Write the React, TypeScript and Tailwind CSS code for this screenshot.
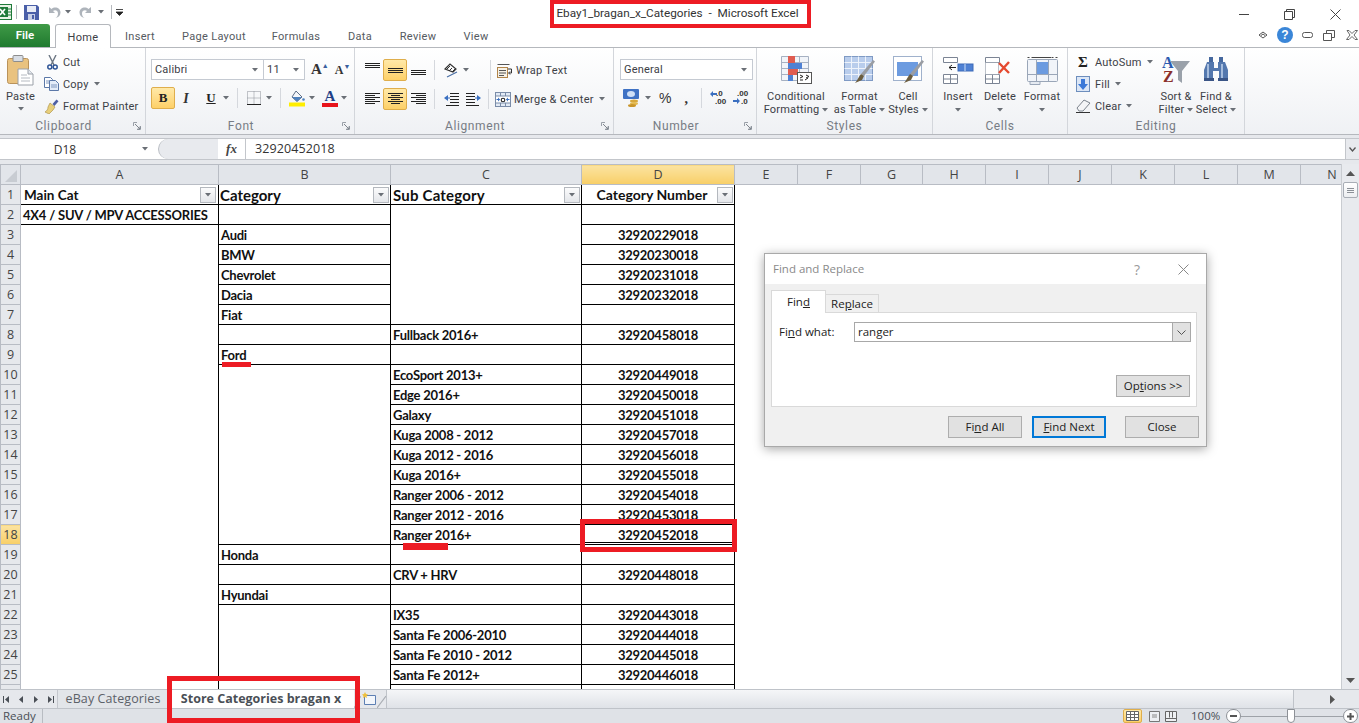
import type { ReactNode } from 'react'

const Caret = ({ className = '' }: { className?: string }) => (
    <svg width="6" height="4" viewBox="0 0 6 4" className={`shrink-0 ${className}`}>
        <path d="M0 0h6L3 3.500z" fill="#6a6f76" />
    </svg>
)

const Sep = ({ className = '' }: { className?: string }) => <div className={`w-px h-[20px] bg-[#d5d8dd] shrink-0 ${className}`} />

const Lines = ({ rows, w = 15, h = 12 }: { rows: [number, number, number][]; w?: number; h?: number }) => (
    <svg width={w} height={h} viewBox={`0 0 ${w} ${h}`} className="shrink-0">
        {rows.map(([a, b, y], i) => (
            <path key={i} d={`M${a} ${y + 0.5}H${b}`} stroke="#222" strokeWidth="1" />
        ))}
    </svg>
)

const ExcelIcon = () => (
    <svg width="15" height="16" viewBox="0 0 15 16" className="-ml-[3px] shrink-0">
        <rect x="0.500" y="0.500" width="14" height="15" fill="#e8f3e6" stroke="#1f7a3a" />
        <rect x="1" y="3" width="10" height="10" fill="#1f7a3a" />
        <path d="M3 5l5 6M8 5l-5 6" stroke="#fff" strokeWidth="1.600" />
        <path d="M11 5h3M11 8h3M11 11h3" stroke="#1f7a3a" />
    </svg>
)

const SaveIcon = () => (
    <svg width="15" height="15" viewBox="0 0 15 15" className="shrink-0">
        <path d="M0 0h13l2 2v13H0z" fill="#4a5fa8" />
        <rect x="3" y="1" width="9" height="6" fill="#e8ecf6" />
        <rect x="4" y="9" width="7" height="6" fill="#c7cfe6" />
        <rect x="8" y="10" width="2" height="4" fill="#4a5fa8" />
    </svg>
)

const UndoIcon = ({ flip = false }: { flip?: boolean }) => (
    <svg width="13" height="13" viewBox="0 0 13 13" className={`shrink-0 ${flip ? '-scale-x-100' : ''}`}>
        <path d="M1 1v6h6L5 5c2-1.500 5-.5 5 2.500 0 2-1 3.500-2.500 4.500 3-.5 5-2.500 5-5.500C12.500 2 7 0 3.500 3z" fill="#aeb4bb" />
    </svg>
)

const PasteIcon = () => (
    <svg width="27" height="31" viewBox="0 0 27 31" className="shrink-0">
        <rect x="0.500" y="3.500" width="21" height="25" rx="2" fill="#e9c27f" stroke="#b9925a" />
        <rect x="6" y="0.500" width="10" height="6" rx="1" fill="#d8dde4" stroke="#8d8d8d" />
        <path d="M11 14h10l5 5v11H11z" fill="#fff" stroke="#9aa0a8" />
        <path d="M21 14v5h5" fill="#e4e8ee" stroke="#9aa0a8" />
        <path d="M14 20h6M14 23h9M14 26h9" stroke="#b5bac1" />
    </svg>
)

const CutIcon = () => (
    <svg width="11" height="15" viewBox="0 0 11 15" className="shrink-0">
        <path d="M2 0l5 10M9 0L4 10" stroke="#6c7683" strokeWidth="1.400" />
        <circle cx="2.800" cy="12" r="2" fill="none" stroke="#2f5597" strokeWidth="1.500" />
        <circle cx="8.200" cy="12" r="2" fill="none" stroke="#2f5597" strokeWidth="1.500" />
    </svg>
)

const CopyIcon = () => (
    <svg width="15" height="14" viewBox="0 0 15 14" className="shrink-0">
        <path d="M.5.500h6l2 2v8H.5z" fill="#fff" stroke="#5b78a8" />
        <path d="M5.500 3.500h6l3 3v7h-9z" fill="#e4ecf8" stroke="#5b78a8" />
        <path d="M7 8h6M7 10h6M2 4h3M2 6h3" stroke="#7f97bf" />
    </svg>
)

const PainterIcon = () => (
    <svg width="15" height="15" viewBox="0 0 15 15" className="shrink-0">
        <path d="M8.500 5l4-4.500 2 1.800L10.500 7z" fill="#4d5fa3" />
        <path d="M6 4l5 4-2 3-4 4-4-2c2-1 3-3 3-5z" fill="#e8cf7a" stroke="#a68a3c" strokeWidth=".6" />
    </svg>
)

const FillIcon = () => (
    <svg width="17" height="17" viewBox="0 0 17 17" className="shrink-0">
        <path d="M7 1l6 6-5 4.500L3 7z" fill="#f4f6fa" stroke="#5d6d85" />
        <path d="M3 7l5 4.500 5-4.500z" fill="#4f81bd" />
        <circle cx="14.500" cy="9.500" r="1.300" fill="#4f81bd" />
        <rect x="0" y="12.500" width="16" height="4" fill="#ffee00" />
    </svg>
)

const BorderIcon = () => (
    <svg width="14" height="14" viewBox="0 0 14 14" className="shrink-0">
        <path d="M.5.500h13v13h-13zM7 .500v13M.5 7h13" fill="none" stroke="#8a8f96" strokeDasharray="1 1" />
        <path d="M0 13.500h14" stroke="#222" />
    </svg>
)

const FontColorIcon = () => (
    <div className="flex flex-col items-center w-[16px] shrink-0">
        <span className="font-['Liberation_Serif',serif] font-bold text-[15px] leading-[13px] text-[#1f3f87]">A</span>
        <div className="w-[16px] h-[4px] bg-[#e8141c]" />
    </div>
)

const OrientationIcon = () => (
    <svg width="16" height="15" viewBox="0 0 16 15" className="shrink-0">
        <path d="M1 6l5-5 6 5-3 3z" fill="none" stroke="#333" strokeWidth="1.200" />
        <path d="M3 6l3-3M5 8l3-3M8 9l3-3" stroke="#333" />
        <path d="M3 14l10-5" stroke="#4a6fa5" strokeWidth="1.200" />
    </svg>
)

const IndentIcon = ({ flip = false }: { flip?: boolean }) => (
    <svg width="15" height="14" viewBox="0 0 15 14" className={`shrink-0 ${flip ? '-scale-x-100' : ''}`}>
        <path d="M6 1.500h9M6 4.500h9M6 7.500h9M6 10.500h9M2 13.500h13" stroke="#222" />
        <path d="M0 6l4-3v6z" fill="#3a6fc0" />
        <path d="M4 6h2" stroke="#3a6fc0" />
    </svg>
)

const WrapIcon = () => (
    <svg width="16" height="15" viewBox="0 0 16 15" className="shrink-0">
        <rect x="0.500" y="4.500" width="10" height="10" fill="#f6f1e6" stroke="#b2854a" />
        <path d="M.5 1.500h12M2 7.500h7M2 10h7M2 12.500h5" stroke="#555" />
        <path d="M11 6h3.500v4H12M13 8.500L11.500 10 13 11.500" fill="none" stroke="#333" />
    </svg>
)

const MergeIcon = () => (
    <svg width="16" height="15" viewBox="0 0 16 15" className="shrink-0">
        <rect x="0.500" y="0.500" width="15" height="14" fill="#e2eaf5" stroke="#7a8ca8" />
        <rect x="1" y="4" width="14" height="7" fill="#fff" />
        <path d="M1.500 7.500h3M14.500 7.500h-3" stroke="#3a6fc0" />
        <path d="M5 7.500l-2-2v4zM11 7.500l2-2v4z" fill="#3a6fc0" />
        <circle cx="8" cy="8" r="1.800" fill="none" stroke="#222" strokeWidth="1.100" />
        <path d="M.5 4h15M.5 11h15M5.500.5v3.500M10.500.5v3.500M5.500 11v3.500M10.500 11v3.500" stroke="#7a8ca8" />
    </svg>
)

const CurrencyIcon = () => (
    <svg width="18" height="18" viewBox="0 0 18 18" className="shrink-0">
        <rect x="0" y="0" width="16" height="10" rx="1" fill="#3f72c4" />
        <ellipse cx="8" cy="5" rx="4" ry="3" fill="#cfe0f7" />
        <ellipse cx="11" cy="12" rx="4" ry="1.500" fill="#d7a83b" />
        <ellipse cx="11" cy="14.500" rx="4" ry="1.500" fill="#e4ba50" />
        <ellipse cx="9" cy="16.500" rx="4" ry="1.500" fill="#c9952a" />
    </svg>
)

const DecimalIcon = ({ more = false }: { more?: boolean }) => (
    <div className="relative w-[16px] h-[14px] shrink-0">
        <span className={`absolute top-[-2px] font-['Liberation_Sans',sans-serif] text-[8px] leading-[9px] font-bold text-[#333] ${more ? 'left-[4px]' : 'left-[6px]'}`}>{more ? '.00' : '.0'}</span>
        <span className={`absolute top-[6px] font-['Liberation_Sans',sans-serif] text-[8px] leading-[9px] font-bold text-[#333] ${more ? 'left-[8px]' : 'left-[5px]'}`}>{more ? '.0' : '.00'}</span>
        <svg width="7" height="6" viewBox="0 0 7 6" className={`absolute ${more ? 'left-0 top-[7px] rotate-180' : 'left-0 top-0'}`}>
            <path d="M0 3l3-3v2h4v2H3v2z" fill="#3a6fc0" />
        </svg>
    </div>
)

const CondFmtIcon = () => (
    <svg width="31" height="28" viewBox="0 0 31 28">
        <path d="M.5.500h27v24h-27zM9.500.500v24M18.500.500v24M.5 6.500h27M.5 12.500h27M.5 18.500h27" fill="#f1f4f9" stroke="#a6b1c2" />
        <rect x="7" y="0" width="7" height="7" fill="#e05c50" />
        <rect x="7" y="7" width="14" height="6" fill="#4f81d4" />
        <rect x="7" y="13" width="10" height="6" fill="#e05c50" />
        <rect x="7" y="19" width="5" height="6" fill="#4f81d4" />
        <rect x="16.500" y="16.500" width="14" height="11" fill="#fff" stroke="#555" />
        <path d="M19 19l3 1.500-3 1.500M19 24h3M25 19l3 1.500-3 1.500M24 24l3-2" stroke="#222" fill="none" />
    </svg>
)

const TableBrushIcon = ({ solid = false }: { solid?: boolean }) => (
    <svg width="31" height="29" viewBox="0 0 31 29">
        {solid ? (
            <>
                <rect x="0.500" y="0.500" width="28" height="24" fill="#fff" stroke="#9fb1cc" />
                <rect x="4" y="6" width="21" height="14" fill="#6c9be0" />
            </>
        ) : (
            <>
                <rect x="0.500" y="0.500" width="28" height="24" fill="#b9cdec" stroke="#7f9ac4" />
                <path d="M7.500 .500v24M14.500 .500v24M21.500 .500v24M.5 6.500h28M.5 12.500h28M.5 18.500h28" stroke="#eef3fb" />
            </>
        )}
        <path d="M29 4l2 1.500L20 20l-3-2z" fill="#9a9da3" />
        <path d="M17 18l3 2-2 4-7 3c2-2 3-5 6-9z" fill="#6b5d3f" />
    </svg>
)

const CellsGrid = ({ children }: { children: ReactNode }) => (
    <svg width="31" height="29" viewBox="0 0 31 29">{children}</svg>
)

const InsertIcon = () => (
    <CellsGrid>
        <path d="M.5 1.500h14v5h-14zM.5 18.500h14v9h-14zM7.500 18.500v9M.5 23h14" fill="#fff" stroke="#7b8494" />
        <rect x="15" y="8" width="15" height="7" fill="#4f81d4" stroke="#3d6ab8" />
        <path d="M22 8v7" stroke="#cfe0f7" />
        <path d="M6 11.500h7M6 11.500l3-2.500M6 11.500l3 2.500" stroke="#222" fill="none" />
    </CellsGrid>
)

const DeleteIcon = () => (
    <CellsGrid>
        <path d="M.5 1.500h14v5h-14zM.5 18.500h14v9h-14zM7.500 18.500v9M.5 23h14" fill="#fff" stroke="#7b8494" />
        <path d="M.5 6.500h13v12h-13z" fill="#fff" stroke="#7b8494" strokeDasharray="1 1" />
        <path d="M14 7l10 10M24 6L14 17" stroke="#e5492f" strokeWidth="2.400" />
    </CellsGrid>
)

const FormatIcon = () => (
    <CellsGrid>
        <path d="M.5 1.500h30" stroke="#444" strokeDasharray="2 2" />
        <path d="M6 1.500h18" stroke="#444" />
        <rect x="0.500" y="3.500" width="30" height="22" rx="1" fill="#f1f4f9" stroke="#9aa6b8" />
        <path d="M9.500 3.500v22M21.500 3.500v22M.5 18.500h30" stroke="#9aa6b8" />
        <rect x="10" y="6" width="11" height="12" fill="#6c9be0" />
        <path d="M3 25.500h10v3H3z" fill="#e6ebf2" stroke="#9aa6b8" />
    </CellsGrid>
)

const SigmaIcon = () => (
    <span className="font-['Liberation_Serif',serif] font-bold text-[15px] leading-[14px] text-[#222] w-[10px] shrink-0 flex justify-center">Σ</span>
)

const FillDownIcon = () => (
    <svg width="14" height="16" viewBox="0 0 14 16" className="shrink-0 ml-[-2px]">
        <rect x="0.500" y="0.500" width="13" height="15" fill="#dbe6f6" stroke="#6d8ebd" />
        <path d="M5 3h4v5h3l-5 6-5-6h3z" fill="#3a78d8" />
    </svg>
)

const EraserIcon = () => (
    <svg width="15" height="14" viewBox="0 0 15 14" className="shrink-0 ml-[-2px]">
        <path d="M1 9l7-8 6 3-7 8H3z" fill="#f4f5f7" stroke="#7b828c" />
        <path d="M0 13.500h14" stroke="#333" />
    </svg>
)

const SortIcon = () => (
    <div className="relative w-[30px] h-[29px] flex flex-col font-['Liberation_Serif',serif] font-bold text-[16px] leading-[14px]">
        <span className="text-[#2b5bb0] pl-[1px]">A</span>
        <span className="text-[#8a2f2a] pl-[2px]">Z</span>
        <svg width="21" height="23" viewBox="0 0 21 23" className="absolute left-[9px] top-[5px]">
            <path d="M0 0h20l-8 10v12l-4-3V10z" fill="#9aa1aa" />
        </svg>
    </div>
)

const BinocularIcon = () => (
    <svg width="28" height="26" viewBox="0 0 28 26">
        <path d="M7 1h4v5H7zM17 1h4v5h-4z" fill="#46689e" />
        <path d="M5 6h7v6h4V6h7l3 8v11h-9V15h-6v10H2V14z" fill="#5478ae" />
        <path d="M5 8h2v16H5zM19 8h2v16h-2z" fill="#a6bddd" />
        <path d="M2 22h10v3H2zM16 22h10v3H16z" fill="#3a5586" />
    </svg>
)

const DialogLauncher = () => (
    <svg width="8" height="8" viewBox="0 0 8 8">
        <path d="M.5 4V.5H4M7.500 4v3.500H4" fill="none" stroke="#9aa0a8" />
        <path d="M2 2l5 5M4.500 7h2.500V4.500" fill="none" stroke="#7f858d" />
    </svg>
)

const Group = ({ label, launcher = true, className, children }: { label: string; launcher?: boolean; className: string; children: ReactNode }) => (
    <div className={`flex flex-col shrink-0 border-r border-[#d3d6db] ${className}`}>
        <div className="h-[69px] flex">{children}</div>
        <div className="h-[17px] flex items-center text-[12px] tracking-[0.6px] text-[#777c84]">
            <span className="flex-1 text-center">{label}</span>
            {launcher && <span className="w-[18px] flex justify-end pr-[4px]"><DialogLauncher /></span>}
        </div>
    </div>
)

const BigButton = ({ icon, top, bottom, caret, className }: { icon: ReactNode; top: string; bottom?: string; caret?: boolean; className: string }) => (
    <div className={`flex flex-col items-center shrink-0 ${className}`}>
        <div className="h-[34px] mt-[8px] flex items-start justify-center">{icon}</div>
        <span className="text-[11px] leading-[13px] tracking-[0.2px] text-[#3c4046] whitespace-nowrap">{top}</span>
        {bottom ? (
            <span className="flex items-center gap-[3px] text-[11px] leading-[13px] tracking-[0.2px] text-[#3c4046] whitespace-nowrap">
                {bottom}
                {caret && <Caret />}
            </span>
        ) : (
            <div className="h-[13px] flex items-center"><Caret /></div>
        )}
    </div>
)

const SmallAction = ({ icon, label, caret, className = '' }: { icon: ReactNode; label: string; caret?: boolean; className?: string }) => (
    <div className={`h-[22px] pt-[6px] flex items-center text-[11px] tracking-[0.2px] text-[#3c4046] whitespace-nowrap ${className}`}>
        {icon}
        <span className="pt-[2px]">{label}</span>
        {caret && <Caret className="ml-[5px]" />}
    </div>
)

const Hot = ({ children, className = '' }: { children: ReactNode; className?: string }) => (
    <div className={`w-[24px] h-[22px] rounded-[2px] border border-[#dfae4c] bg-linear-to-b from-[#ffe9a8] to-[#fdd067] flex items-center justify-center shrink-0 ${className}`}>
        {children}
    </div>
)

const Combo = ({ text, className }: { text: string; className: string }) => (
    <div className={`h-[21px] border border-[#c5cad2] bg-white flex items-center justify-between pl-[3px] pr-[5px] text-[11px] tracking-[0.2px] text-[#3c4046] shrink-0 ${className}`}>
        <span className="pt-[2px]">{text}</span>
        <Caret />
    </div>
)

const TitleBar = () => (
    <div className="h-[24px] flex items-center bg-white shrink-0">
        <div className="flex items-center w-[550px] shrink-0">
            <ExcelIcon />
            <div className="w-px h-[14px] bg-[#b6b9be] ml-[4px] mr-[7px]" />
            <SaveIcon />
            <div className="ml-[9px]"><UndoIcon /></div>
            <Caret className="ml-[4px]" />
            <div className="ml-[8px]"><UndoIcon flip /></div>
            <Caret className="ml-[6px]" />
            <div className="w-px h-[14px] bg-[#b6b9be] ml-[7px] mr-[4px]" />
            <svg width="7" height="7" viewBox="0 0 7 7"><path d="M0 .500h7M0 3h7L3.500 6.500z" stroke="#222" fill="#222" strokeWidth=".8" /></svg>
        </div>
        <div className="w-[260px] pt-[4px] pr-[5px] text-center text-[11.750px] text-[#333] whitespace-pre shrink-0">Ebay1_bragan_x_Categories  -  Microsoft Excel</div>
        <div className="flex-1 flex items-center justify-end pr-[18px] gap-[35px] pt-[4px]">
            <svg width="10" height="10" viewBox="0 0 10 10"><path d="M0 5.500h10" stroke="#444" /></svg>
            <svg width="11" height="11" viewBox="0 0 11 11"><path d="M.5 2.500h8v8h-8zM2.500 2.500v-2h8v8h-2" fill="none" stroke="#444" /></svg>
            <svg width="11" height="11" viewBox="0 0 11 11"><path d="M.5.500l10 10M10.500.500l-10 10" stroke="#444" /></svg>
        </div>
    </div>
)

const tabs: [string, string][] = [
    ['Insert', 'w-[58px]'],
    ['Page Layout', 'w-[90px]'],
    ['Formulas', 'w-[74px]'],
    ['Data', 'w-[54px]'],
    ['Review', 'w-[62px]'],
    ['View', 'w-[54px]'],
]

const TabRow = () => (
    <div className="h-[24px] flex items-end bg-white border-b border-[#b5b8bd] shrink-0">
        <div className="w-[50px] h-[23px] rounded-tr-[3px] bg-linear-to-b from-[#3f9a47] to-[#1f7a2f] text-white text-[11.500px] font-semibold flex items-center justify-center">File</div>
        <div className="w-[56px] h-[24px] pt-[3px] ml-[5px] -mb-px border border-b-0 border-[#b5b8bd] rounded-t-[3px] bg-white flex items-center justify-center text-[11px] tracking-[0.3px] text-[#3c4046]">Home</div>
        {tabs.map(([t, c]) => (
            <div key={t} className={`h-[23px] pt-[3px] flex items-center justify-center text-[11px] tracking-[0.3px] text-[#555a61] ${c}`}>{t}</div>
        ))}
        <div className="flex-1 h-[23px] flex items-center justify-end pr-[1px] pb-[1px]">
            <svg width="10" height="8" viewBox="0 0 10 8" className="mr-[9px]"><path d="M1 4l4-3 4 3-4 3zM3 4.500l2-1.500 2 1.500" fill="none" stroke="#555" /></svg>
            <div className="w-[16px] h-[16px] rounded-full bg-[#3a86d8] text-white text-[12px] leading-[16px] font-bold text-center font-['Liberation_Sans',sans-serif]">?</div>
            <svg width="11" height="7" viewBox="0 0 11 7" className="ml-[9px]"><rect x="0.500" y="0.500" width="10" height="5" rx="2" fill="none" stroke="#555" /></svg>
            <svg width="12" height="11" viewBox="0 0 12 11" className="ml-[10px]"><path d="M.5 3.500h8v7h-8zM3.500 3.500v-3h8v7h-3" fill="#fff" stroke="#555" /></svg>
            <svg width="12" height="10" viewBox="0 0 12 10" className="ml-[11px]"><path d="M1 .500h2l3 3 3-3h2.500L8 5l3.500 4.500H9l-3-3-3 3H.5L4 5z" fill="#fff" stroke="#666" /></svg>
        </div>
    </div>
)

const AlignTop: [number, number, number][] = [[0, 15, 0], [0, 15, 2], [0, 15, 4]]
const AlignL: [number, number, number][] = [[0, 15, 0], [0, 10, 2], [0, 15, 4], [0, 10, 6], [0, 15, 8], [0, 10, 10]]
const AlignC: [number, number, number][] = [[0, 15, 0], [3, 12, 2], [0, 15, 4], [3, 12, 6], [0, 15, 8], [3, 12, 10]]
const AlignR: [number, number, number][] = [[0, 15, 0], [5, 15, 2], [0, 15, 4], [5, 15, 6], [0, 15, 8], [5, 15, 10]]

const Ribbon = () => (
    <div className="h-[87px] flex bg-linear-to-b from-white to-[#eff1f4] border-b border-[#b5b8bd] shrink-0 font-['Roboto',sans-serif]">
        <Group label="Clipboard" className="w-[146px]">
            <div className="w-[31px] ml-[5px] flex flex-col items-center text-[11px] tracking-[0.2px] text-[#3c4046]">
                <div className="h-[34px] mt-[7px]"><PasteIcon /></div>
                <span className="leading-[13px] mt-[1px]">Paste</span>
                <div className="h-[12px] flex items-center"><Caret /></div>
            </div>
            <div className="ml-[11px] flex flex-col">
                <SmallAction icon={<span className="w-[16px] flex"><CutIcon /></span>} label="Cut" />
                <SmallAction icon={<span className="w-[16px] flex -ml-[3px] mr-[3px]"><CopyIcon /></span>} label="Copy" caret />
                <SmallAction icon={<span className="w-[16px] flex -ml-[3px] mr-[3px]"><PainterIcon /></span>} label="Format Painter" />
            </div>
        </Group>

        <Group label="Font" className="w-[209px]">
            <div className="pl-[5px] pt-[11px] flex flex-col gap-[7px]">
                <div className="flex items-center">
                    <Combo text="Calibri" className="w-[113px]" />
                    <Combo text="11" className="w-[42px] -ml-px" />
                    <span className="ml-[6px] font-['Liberation_Serif',serif] font-bold text-[15px] leading-none text-[#333]">A<sup className="text-[#3a5f9e] text-[7px] -top-[6px]">▲</sup></span>
                    <span className="ml-[6px] font-['Liberation_Serif',serif] font-bold text-[12px] leading-none text-[#333]">A<sup className="text-[#3a5f9e] text-[7px] -top-[5px]">▼</sup></span>
                </div>
                <div className="flex items-center h-[22px]">
                    <Hot className="w-[23px] font-['Liberation_Serif',serif] font-bold text-[13px] text-[#222]">B</Hot>
                    <span className="ml-[5px] w-[12px] text-center font-['Liberation_Serif',serif] italic font-bold text-[14px] text-[#333]">I</span>
                    <span className="ml-[13px] w-[12px] text-center font-['Liberation_Serif',serif] underline font-bold text-[13px] text-[#222]">U</span>
                    <Caret className="ml-[6px]" />
                    <Sep className="ml-[8px]" />
                    <div className="ml-[9px]"><BorderIcon /></div>
                    <Caret className="ml-[5px]" />
                    <Sep className="ml-[8px]" />
                    <div className="ml-[8px]"><FillIcon /></div>
                    <Caret className="ml-[3px]" />
                    <div className="ml-[7px]"><FontColorIcon /></div>
                    <Caret className="ml-[3px]" />
                </div>
            </div>
        </Group>

        <Group label="Alignment" className="w-[259px]">
            <div className="pl-[10px] pt-[11px] flex flex-col gap-[7px]">
                <div className="flex items-center h-[22px]">
                    <div className="mb-[9px]"><Lines rows={AlignTop} h={5} /></div>
                    <Hot className="ml-[3px]"><Lines rows={AlignTop} h={5} /></Hot>
                    <div className="ml-[4px] mt-[5px]"><Lines rows={AlignTop} h={5} /></div>
                    <Sep className="ml-[8px]" />
                    <div className="ml-[9px]"><OrientationIcon /></div>
                    <Caret className="ml-[3px]" />
                    <Sep className="ml-[21px]" />
                    <div className="ml-[6px]"><WrapIcon /></div>
                    <span className="ml-[3px] pt-[2px] text-[11px] tracking-[0.3px] text-[#3c4046] whitespace-nowrap">Wrap Text</span>
                </div>
                <div className="flex items-center h-[22px]">
                    <Lines rows={AlignL} />
                    <Hot className="ml-[3px]"><Lines rows={AlignC} /></Hot>
                    <div className="ml-[4px]"><Lines rows={AlignR} /></div>
                    <Sep className="ml-[8px]" />
                    <div className="ml-[9px]"><IndentIcon /></div>
                    <div className="ml-[7px]"><IndentIcon flip /></div>
                    <Sep className="ml-[7px]" />
                    <div className="ml-[6px]"><MergeIcon /></div>
                    <span className="ml-[3px] pt-[2px] text-[11px] tracking-[0.3px] text-[#3c4046] whitespace-nowrap">Merge &amp; Center</span>
                    <Caret className="ml-[5px]" />
                </div>
            </div>
        </Group>

        <Group label="Number" className="w-[143px]">
            <div className="pl-[6px] pt-[11px] flex flex-col gap-[7px]">
                <Combo text="General" className="w-[133px]" />
                <div className="flex items-center h-[22px] pl-[3px]">
                    <CurrencyIcon />
                    <Caret className="ml-[4px]" />
                    <span className="ml-[8px] text-[14px] text-[#333] font-['Liberation_Sans',sans-serif]">%</span>
                    <span className="ml-[13px] text-[14px] font-bold text-[#333] font-['Liberation_Serif',serif]">,</span>
                    <Sep className="ml-[13px]" />
                    <div className="ml-[8px]"><DecimalIcon /></div>
                    <div className="ml-[7px]"><DecimalIcon more /></div>
                </div>
            </div>
        </Group>

        <Group label="Styles" launcher={false} className="w-[176px]">
            <div className="flex pl-[5px]">
                <BigButton icon={<CondFmtIcon />} top="Conditional" bottom="Formatting" caret className="w-[68px]" />
                <BigButton icon={<TableBrushIcon />} top="Format" bottom="as Table" caret className="w-[55px] ml-[2px]" />
                <BigButton icon={<TableBrushIcon solid />} top="Cell" bottom="Styles" caret className="w-[40px] ml-[1px]" />
            </div>
        </Group>

        <Group label="Cells" launcher={false} className="w-[135px]">
            <div className="flex pl-[4px]">
                <BigButton icon={<InsertIcon />} top="Insert" className="w-[42px]" />
                <BigButton icon={<DeleteIcon />} top="Delete" className="w-[42px]" />
                <BigButton icon={<FormatIcon />} top="Format" className="w-[42px]" />
            </div>
        </Group>

        <Group label="Editing" launcher={false} className="w-[177px]">
            <div className="pl-[10px] flex flex-col w-[88px] shrink-0">
                <SmallAction icon={<span className="w-[17px] flex"><SigmaIcon /></span>} label="AutoSum" caret />
                <SmallAction icon={<span className="w-[17px] flex"><FillDownIcon /></span>} label="Fill" caret />
                <SmallAction icon={<span className="w-[17px] flex"><EraserIcon /></span>} label="Clear" caret />
            </div>
            <BigButton icon={<SortIcon />} top="Sort &" bottom="Filter" caret className="w-[40px]" />
            <BigButton icon={<BinocularIcon />} top="Find &" bottom="Select" caret className="w-[40px]" />
        </Group>
    </div>
)

const FormulaBar = () => (
    <div className="h-[29px] bg-[#e6e8ec] pt-[3px] pb-[4px] shrink-0">
        <div className="h-full bg-white border-y border-[#c3c6cb] flex items-center">
            <div className="w-[130px] pt-[1px] text-center text-[12px] text-[#333]">D18</div>
            <Caret className="ml-[12px]" />
            <div className="ml-[10px] w-[60px] h-[20px] rounded-l-full bg-[#e8eaee] border-l border-[#b9bdc3] shrink-0" />
            <span className="ml-[5px] w-[17px] text-center font-['Liberation_Serif',serif] italic font-bold text-[13px] text-[#444]">fx</span>
            <div className="w-px h-full ml-[5px] bg-[#c3c6cb]" />
            <span className="ml-[9px] pt-[1px] text-[12.500px] tracking-[0.1px] text-[#333]">32920452018</span>
            <div className="ml-auto w-[14px] h-full bg-[#e8eaee] border-l border-[#c3c6cb] flex items-center justify-center">
                <svg width="7" height="5" viewBox="0 0 7 5"><path d="M.5.500L3.500 4l3-3.500" fill="none" stroke="#555" strokeWidth="1.300" /></svg>
            </div>
        </div>
    </div>
)

const colHeads: [string, string][] = [
    ['A', 'w-[198px]'],
    ['B', 'w-[172px]'],
    ['C', 'w-[191px]'],
    ['D', 'w-[153px]'],
    ['E', 'w-[63px]'],
    ['F', 'w-[63px]'],
    ['G', 'w-[62px]'],
    ['H', 'w-[63px]'],
    ['I', 'w-[63px]'],
    ['J', 'w-[63px]'],
    ['K', 'w-[63px]'],
    ['L', 'w-[63px]'],
    ['M', 'w-[63px]'],
    ['N', 'w-[63px]'],
]

type Row = { n: number; a?: string | null; aSpan?: number; b: string | null; bSpan?: number; c: string | null; cSpan?: number; d: string }

const rows: Row[] = [
    { n: 2, a: '4X4 / SUV / MPV ACCESSORIES', b: '', c: '', cSpan: 6, d: '' },
    { n: 3, a: '', aSpan: 24, b: 'Audi', c: null, d: '32920229018' },
    { n: 4, a: null, b: 'BMW', c: null, d: '32920230018' },
    { n: 5, a: null, b: 'Chevrolet', c: null, d: '32920231018' },
    { n: 6, a: null, b: 'Dacia', c: null, d: '32920232018' },
    { n: 7, a: null, b: 'Fiat', c: null, d: '' },
    { n: 8, a: null, b: '', c: 'Fullback 2016+', d: '32920458018' },
    { n: 9, a: null, b: 'Ford', c: '', d: '' },
    { n: 10, a: null, b: '', bSpan: 9, c: 'EcoSport 2013+', d: '32920449018' },
    { n: 11, a: null, b: null, c: 'Edge 2016+', d: '32920450018' },
    { n: 12, a: null, b: null, c: 'Galaxy', d: '32920451018' },
    { n: 13, a: null, b: null, c: 'Kuga 2008 - 2012', d: '32920457018' },
    { n: 14, a: null, b: null, c: 'Kuga 2012 - 2016', d: '32920456018' },
    { n: 15, a: null, b: null, c: 'Kuga 2016+', d: '32920455018' },
    { n: 16, a: null, b: null, c: 'Ranger 2006 - 2012', d: '32920454018' },
    { n: 17, a: null, b: null, c: 'Ranger 2012 - 2016', d: '32920453018' },
    { n: 18, a: null, b: null, c: 'Ranger 2016+', d: '32920452018' },
    { n: 19, a: null, b: 'Honda', c: '', d: '' },
    { n: 20, a: null, b: '', c: 'CRV + HRV', d: '32920448018' },
    { n: 21, a: null, b: 'Hyundai', c: '', d: '' },
    { n: 22, a: null, b: '', bSpan: 5, c: 'IX35', d: '32920443018' },
    { n: 23, a: null, b: null, c: 'Santa Fe 2006-2010', d: '32920444018' },
    { n: 24, a: null, b: null, c: 'Santa Fe 2010 - 2012', d: '32920445018' },
    { n: 25, a: null, b: null, c: 'Santa Fe 2012+', d: '32920446018' },
    { n: 26, a: null, b: null, c: '', d: '' },
]

const FilterBtn = () => (
    <div className="w-[16px] h-[16px] border border-[#b4b8be] bg-linear-to-b from-[#fbfbfc] to-[#e4e6ea] flex items-center justify-center shrink-0">
        <Caret />
    </div>
)

const cellBase = "border border-black px-[2px] py-0 font-['Lato',sans-serif] font-bold text-[13px] tracking-[-0.25px] leading-[18px] text-[#111] whitespace-nowrap overflow-hidden"
const headBase = "font-['Lato',sans-serif] font-bold leading-[18px] text-[#111] whitespace-nowrap"

const Sheet = () => (
    <div className="h-[525px] flex overflow-hidden shrink-0">
        <div className="w-[1341px] overflow-hidden shrink-0">
            <table className="table-fixed border-collapse w-[1364px]">
                <colgroup>
                    <col className="w-[20px]" />
                    {colHeads.map(([c, w]) => <col key={c} className={w} />)}
                </colgroup>
                <tbody>
                    <tr className="h-[20px]">
                        <td className="bg-[#e2e5ea] border border-[#b8bcc4] p-0 leading-[18px]">
                            <svg width="19" height="18" viewBox="0 0 19 18" className="block"><path d="M16 4v12H4z" fill="#c8ccd2" /></svg>
                        </td>
                        {colHeads.map(([c]) => (
                            <td key={c} className={`border border-[#b8bcc4] p-0 text-center text-[12.500px] leading-[18px] text-[#444] ${c === 'D' ? 'bg-linear-to-b from-[#fbe3a0] to-[#f8cf66]' : 'bg-[#e2e5ea]'}`}>{c}</td>
                        ))}
                    </tr>
                    <tr className="h-[20px]">
                        <td className="bg-[#e6e8ec] border border-[#b8bcc4] p-0 text-center text-[12.500px] leading-[18px] text-[#444]">1</td>
                        <td className="border-b border-black px-[2px] py-0">
                            <div className={`flex items-center justify-between text-[13.500px] pl-[1px] ${headBase}`}>Main Cat<FilterBtn /></div>
                        </td>
                        <td className="border border-black px-[1px] py-0">
                            <div className={`flex items-center justify-between text-[15px] ${headBase}`}>Category<FilterBtn /></div>
                        </td>
                        <td className="border border-black pl-[2px] pr-[1px] py-0">
                            <div className={`flex items-center justify-between text-[15px] tracking-[0.2px] ${headBase}`}>Sub Category<FilterBtn /></div>
                        </td>
                        <td className="border border-black px-[1px] py-0">
                            <div className={`flex items-center justify-between text-[14px] ${headBase}`}>
                                <span className="flex-1 text-center pl-[4px]">Category Number</span>
                                <FilterBtn />
                            </div>
                        </td>
                        <td colSpan={10} />
                    </tr>
                    {rows.map((r) => (
                        <tr key={r.n} className="h-[20px]">
                            <td className={`border border-[#b8bcc4] p-0 text-center text-[12.500px] leading-[18px] text-[#444] ${r.n === 18 ? 'bg-linear-to-b from-[#fbe3a0] to-[#f8cf66]' : 'bg-[#e6e8ec]'}`}>{r.n === 26 ? '' : r.n}</td>
                            {r.a !== null && (
                                <td rowSpan={r.aSpan} className={`px-[2px] py-0 align-middle font-['Lato',sans-serif] font-bold text-[13px] tracking-[-0.2px] leading-[18px] text-[#111] whitespace-nowrap overflow-hidden ${r.n === 2 ? 'border-b border-black' : ''}`}>{r.a}</td>
                            )}
                            {r.b !== null && <td rowSpan={r.bSpan} className={cellBase}>{r.b}</td>}
                            {r.c !== null && <td rowSpan={r.cSpan} className={cellBase}>{r.c}</td>}
                            <td className={`${cellBase} text-center ${r.n === 18 ? 'shadow-[inset_0_-1px_0_#fff,inset_0_-2px_0_#000]' : ''}`}>{r.d}</td>
                            <td colSpan={10} />
                        </tr>
                    ))}
                </tbody>
            </table>
        </div>
        <div className="w-[18px] bg-[#e8eaee] border-l border-[#c9ccd1] flex flex-col items-center">
            <div className="h-[18px] flex items-center justify-center">
                <svg width="9" height="5" viewBox="0 0 9 5"><path d="M0 5l4.500-5L9 5z" fill="#555" /></svg>
            </div>
            <div className="w-[15px] h-[16px] border border-[#a8adb5] bg-linear-to-b from-white to-[#eceef1] rounded-[2px] flex flex-col items-center justify-center gap-px">
                <div className="w-[7px] h-px bg-[#8a8f96]" />
                <div className="w-[7px] h-px bg-[#8a8f96]" />
                <div className="w-[7px] h-px bg-[#8a8f96]" />
            </div>
            <div className="mt-auto h-[17px] flex items-center justify-center">
                <svg width="9" height="5" viewBox="0 0 9 5"><path d="M0 0l4.500 5L9 0z" fill="#555" /></svg>
            </div>
        </div>
    </div>
)

const NavArrow = ({ d }: { d: string }) => (
    <svg width="6" height="7" viewBox="0 0 6 7"><path d={d} fill="#4a4f56" /></svg>
)

const TabSlant = ({ className }: { className: string }) => (
    <svg viewBox="0 0 8 18" preserveAspectRatio="none" className={`h-full shrink-0 ${className}`}>
        <path d="M0 18L8 6" stroke="#a9adb4" fill="none" />
    </svg>
)

const SheetTabs = () => (
    <div className="h-[20px] flex items-center bg-[#e6e8ec] border-y border-[#bfc3c9] shrink-0">
        <div className="w-[57px] flex items-center gap-[9px] pl-[3px] shrink-0">
            <NavArrow d="M0 0h1v7H0zM6 0v7L2 3.500z" />
            <NavArrow d="M5 0v7L1 3.500z" />
            <NavArrow d="M1 0v7l4-3.500z" />
            <NavArrow d="M0 0v7l4-3.500zM5 0h1v7H5z" />
        </div>
        <div className="w-[111px] h-full flex items-center justify-center bg-[#e2e5e9] border-l border-[#c4c7cd] text-[12.500px] tracking-[0.1px] text-[#5c6168] shrink-0">eBay Categories</div>
        <div className="w-[186px] h-full flex items-center justify-center bg-white text-[12.500px] font-bold text-[#4a4f56] shrink-0">Store Categories bragan x</div>
        <TabSlant className="w-[7px]" />
        <div className="shrink-0">
            <svg width="16" height="14" viewBox="0 0 16 14"><path d="M3.500 3.500h11v9h-11z" fill="#f3f6fb" stroke="#5d7fb3" /><path d="M4 0l1 2 2 .500-1.500 1.500.5 2-2-1-2 1 .5-2L1 2.500 3 2z" fill="#eebf3b" /></svg>
        </div>
        <TabSlant className="w-[9px]" />
        <div className="w-[908px] h-full bg-linear-to-b from-[#f5f6f8] to-[#dfe2e7] border-x border-[#bfc3c9] shrink-0" />
        <div className="flex-1 flex items-center justify-end pr-[24px]">
            <svg width="5" height="9" viewBox="0 0 5 9"><path d="M0 0l5 4.500L0 9z" fill="#555" /></svg>
        </div>
    </div>
)

const StatusBar = () => (
    <div className="h-[14px] flex items-center bg-[#dfe2e7] text-[11.500px] text-[#4a4f56] shrink-0 overflow-hidden">
        <span className="pl-[3px] w-[43px] border-r border-[#b8bcc2] h-full flex items-center shrink-0">Ready</span>
        <div className="ml-auto flex items-center pr-[1px]">
            <div className="w-[19px] h-[14px] border border-[#dfae4c] rounded-[2px] bg-linear-to-b from-[#ffe9a8] to-[#fdd067] flex items-center justify-center">
                <svg width="13" height="10" viewBox="0 0 13 10"><path d="M.5.500h12v9H.5zM4.500.5v9M8.500.5v9M.5 3.500h12M.5 6.500h12" fill="#fff" stroke="#666" /></svg>
            </div>
            <svg width="11" height="11" viewBox="0 0 11 11" className="ml-[7px]"><path d="M.5.500h10v10H.5z" fill="#eef0f3" stroke="#777" /><path d="M3 4h5M3 6h5" stroke="#888" /></svg>
            <svg width="12" height="11" viewBox="0 0 12 11" className="ml-[5px]"><path d="M.5.500h11v10H.5zM4.500.5v6M7.500.5v6M.5 7.500h11" fill="#eef0f3" stroke="#666" /></svg>
            <span className="ml-[14px] w-[26px]">100%</span>
            <div className="ml-[9px] w-[15px] h-[14px] rounded-full border border-[#8d9197] bg-white flex items-center justify-center shrink-0">
                <div className="w-[7px] h-[2px] bg-[#555]" />
            </div>
            <div className="relative w-[102px] h-px bg-[#9ea2a8]">
                <div className="absolute left-[46px] -top-[7px] w-[8px] h-[14px] bg-white border border-[#8d9197] rounded-b-[4px]" />
            </div>
            <div className="w-[15px] h-[14px] rounded-full border border-[#8d9197] bg-white flex items-center justify-center shrink-0">
                <svg width="7" height="7" viewBox="0 0 7 7"><path d="M0 3.500h7M3.500 0v7" stroke="#555" strokeWidth="2" /></svg>
            </div>
        </div>
    </div>
)

const DlgButton = ({ children, primary = false, className = '' }: { children: ReactNode; primary?: boolean; className?: string }) => (
    <div className={`w-[74px] h-[22px] flex items-center justify-center bg-[#e1e1e1] text-[11.500px] text-[#222] shrink-0 ${primary ? 'border-2 border-[#0078d7]' : 'border border-[#adadad]'} ${className}`}>
        {children}
    </div>
)

const FindDialog = () => (
    <div className="absolute left-[764px] top-[253px] w-[443px] h-[194px] flex flex-col bg-[#f0f0f0] border border-[#a9a9a9] shadow-[0_2px_10px_rgba(0,0,0,0.35)] font-['Open_Sans',sans-serif]">
        <div className="h-[30px] bg-white flex items-center pl-[8px] pr-[17px] text-[11.500px] text-[#8a8a8a] shrink-0">
            <span>Find and Replace</span>
            <span className="ml-auto text-[14px] text-[#9a9a9a]">?</span>
            <svg width="11" height="11" viewBox="0 0 11 11" className="ml-[38px]"><path d="M.5.500l10 10M10.500.500l-10 10" stroke="#888" /></svg>
        </div>
        <div className="flex flex-col pl-[6px] pr-[9px] pt-[6px]">
            <div className="flex items-end h-[22px] text-[11.500px] text-[#222]">
                <div className="w-[55px] h-[23px] -mb-px bg-white border border-b-0 border-[#d9d9d9] flex items-center justify-center z-10">Fin<u>d</u></div>
                <div className="w-[53px] h-[18px] bg-[#f0f0f0] border border-b-0 border-l-0 border-[#d9d9d9] flex items-center justify-center">Re<u>p</u>lace</div>
            </div>
            <div className="h-[95px] bg-white border border-[#d9d9d9] flex flex-col pl-[7px] pr-[5px] pt-[9px]">
                <div className="flex items-center h-[20px] text-[11.500px] text-[#222]">
                    <span className="w-[75px] shrink-0">Fi<u>n</u>d what:</span>
                    <div className="flex-1 h-[20px] bg-white border border-[#a8a8a8] flex items-center pl-[3px] pr-0">
                        ranger
                        <div className="ml-auto w-[18px] h-full bg-[#e1e1e1] border-l border-[#a8a8a8] flex items-center justify-center">
                            <svg width="9" height="5" viewBox="0 0 9 5"><path d="M.5.500l4 4 4-4" fill="none" stroke="#555" /></svg>
                        </div>
                    </div>
                </div>
                <div className="mt-auto mb-[9px] flex justify-end pr-[1px]">
                    <DlgButton>Op<u>t</u>ions &gt;&gt;</DlgButton>
                </div>
            </div>
            <div className="flex justify-end pt-[9px] -mr-[2px]">
                <DlgButton>Fi<u>n</u>d All</DlgButton>
                <DlgButton primary className="ml-[10px]"><u>F</u>ind Next</DlgButton>
                <DlgButton className="ml-[19px]">Close</DlgButton>
            </div>
        </div>
    </div>
)

export default function App() {
    return (
        <div className="relative w-[1359px] h-[723px] overflow-hidden bg-white flex flex-col font-['Open_Sans',sans-serif]">
            <div className="font-['Roboto',sans-serif] shrink-0">
                <TitleBar />
                <TabRow />
            </div>
            <Ribbon />
            <FormulaBar />
            <Sheet />
            <SheetTabs />
            <StatusBar />

            <FindDialog />

            {/* red annotation marks on top of the screenshot */}
            <div className="absolute left-[550px] top-0 w-[261px] h-[28px] border-[4px] border-[#ed1c24]" />
            <div className="absolute left-[580px] top-[519px] w-[157px] h-[33px] border-[5px] border-[#ed1c24]" />
            <div className="absolute left-[167px] top-[676px] w-[193px] h-[47px] border-[5px] border-[#ed1c24]" />
            <div className="absolute left-[222px] top-[362px] w-[29px] h-[5px] bg-[#ed1c24]" />
            <div className="absolute left-[403px] top-[543px] w-[45px] h-[7px] bg-[#ed1c24]" />
        </div>
    )
}
